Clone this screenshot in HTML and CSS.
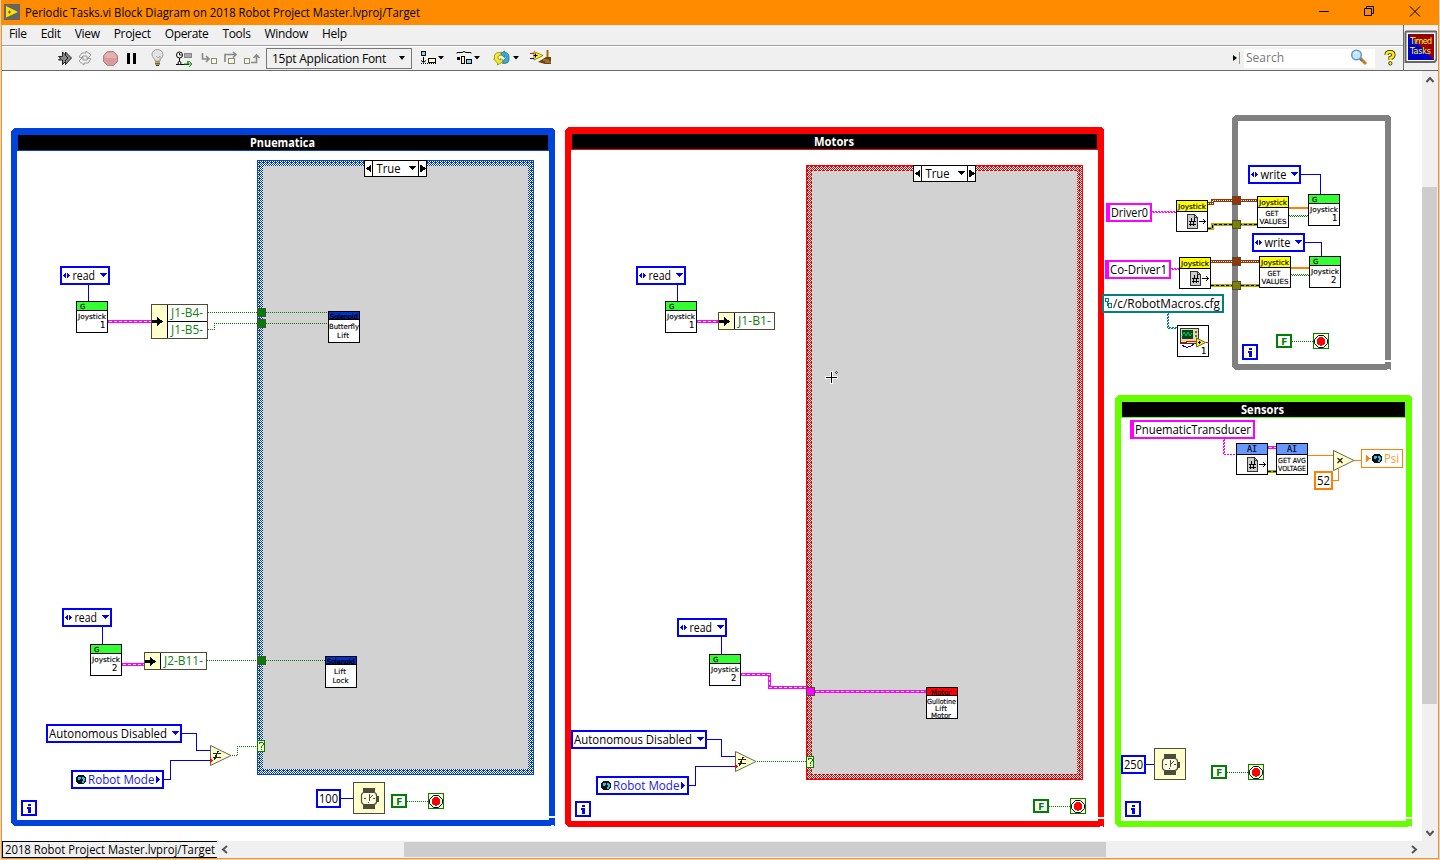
FILE: index.html
```html
<!DOCTYPE html>
<html lang="en">
<head>
<meta charset="utf-8">
<title>Periodic Tasks.vi Block Diagram</title>
<link rel="stylesheet" href="styles.css">
</head>
<body>
<div class="window">
  <header class="titlebar">
    <svg class="app-icon" width="16" height="16" viewBox="0 0 16 16"><rect width="16" height="16" fill="#666"/><path d="M2 2L14 8L2 13.500Z" fill="#ffe000"/><path d="M4 8h3M5.500 6.500v3" stroke="#665500"/></svg>
    <svg class="fit" width="420" height="25"><text x="0" y="17" class="ui title" textLength="395" lengthAdjust="spacingAndGlyphs">Periodic Tasks.vi Block Diagram on 2018 Robot Project Master.lvproj/Target</text></svg>
    <svg class="win-buttons" width="104" height="24" viewBox="1318 0 104 24" fill="none" stroke="#000"><path d="M1319 11.500h10"/><path d="M1364.500 8.500h7v7h-7zM1366.500 8v-1.500h7v7h-2" /><path d="M1410 6.500l10 10M1420 6.500l-10 10"/></svg>
  </header>

  <div class="bars">
    <div class="bars-left">
      <nav class="menubar"><span>File</span><span>Edit</span><span>View</span><span>Project</span><span>Operate</span><span>Tools</span><span>Window</span><span>Help</span></nav>
      <div class="toolbar">
        <svg class="tools" width="210" height="23" viewBox="56 47 210 23">
          <path d="M58.500 56.500h4v-4.500l3 3v-3l6 6-6 6.500v-3l-3 3v-4.500h-4l2-2z" fill="#888" stroke="#222"/><path d="M65 55l3 3-3 3" fill="none" stroke="#222"/>
          <g fill="none" stroke="#999"><path d="M79 57l3-4h4v-2l5 4-4 4v-3h-4l-2 2z"/><path d="M91 59l-3 4h-4v2l-5-4 4-4v3h4l2-2z"/></g>
          <path d="M107.500 51.500h6l4 4v6l-4 4h-6l-4-4v-6z" fill="#d99" stroke="#a88"/><path d="M107 53h7l2 3v2h-11v-3z" fill="#e5b2b2"/>
          <path d="M127 53h3v11h-3zM133 53h3v11h-3z" fill="#000"/>
          <path d="M155 61c0-3-3-3-3-6.500a5.500 5 0 0 1 11 0c0 3.500-3 3.500-3 6.500z" fill="#e3e3e3" stroke="#999"/><path d="M156 56l2 2 2-2v4" fill="none" stroke="#aaa"/><path d="M155 61h5v4h-5z" fill="#a9a24b"/><path d="M155 63.500h5" stroke="#666"/><path d="M156 65.500h3" stroke="#333"/>
          <circle cx="179.500" cy="55" r="3" fill="#fff" stroke="#000"/><path d="M179.500 53v2h2M179.500 58v4M176 64.500h8M188 64v-3M184 64.500h5" stroke="#000" fill="none"/><rect x="184.500" y="53.500" width="7" height="4" fill="#aaa" stroke="#888"/><circle cx="179.500" cy="63" r="1.500" fill="#fff" stroke="#000"/><path d="M184 64h7M189 61l3 3-3 3" fill="none" stroke="#00a800"/>
          <g fill="none" stroke="#888"><path d="M202.500 53v6h6M206 56l3 3-3 3" stroke-width="1.600"/><rect x="211.500" y="58.500" width="5" height="5" fill="#fdfdd2"/><path d="M225 62v-7.500h11M233 52l3 2.500-3 3" stroke-width="1.600"/><rect x="228.500" y="58.500" width="6" height="5" fill="#fdfdd2"/><rect x="244.500" y="58.500" width="5" height="5" fill="#fdfdd2"/><path d="M251 62.500h5.500v-7M253.500 58l3-3 3 3" stroke-width="1.600"/></g>
        </svg>
        <div class="font-select"><span>15pt Application Font</span><i class="caret"></i></div>
        <svg width="146" height="23" viewBox="412 47 146 23">
          <g stroke="#000"><rect x="421.500" y="51.500" width="4" height="4" fill="#6cdfff"/><path d="M423.500 57v5M421 60.500l2.500 2 2.500-2" fill="none"/><path d="M421 63.500h15" stroke-dasharray="1 1"/><rect x="428.500" y="58.500" width="7" height="4" fill="#ffffa8"/><path d="M457 53.500v-1h5l2-1 2 1h5v1" fill="none"/><path d="M457 57h3v3h-3z" stroke="none"/><rect x="461.500" y="56.500" width="3" height="7" fill="#ffffa8"/><rect x="466.500" y="59.500" width="5" height="4" fill="#6cdfff"/></g>
          <path d="M438 56h6l-3 3.500zM474 56h6l-3 3.500zM513 56h6l-3 3.500z"/>
          <path d="M502 52.500q-7-1-7.500 3.500v3h-1l4 4v2l5-3v-2.500l-2-1v1.500q-2.500 0-2.500-3 0-2 4-2z" fill="#f2e72e" stroke="#988e00" stroke-width=".8"/>
          <path d="M500.500 54l4-3v1.500q4.500 0 4.500 4.500v3q0 3-4 3.500h-2.500l1.500-4q2-.5 2-2 0-1.500-1.500-2v2z" fill="#3fa9cd" stroke="#227793" stroke-width=".8"/>
          <path d="M534 51.500l9 4-9 4.500z" fill="#ffef36" stroke="#9a8a00"/><path d="M530 53.500h4" stroke="red"/><path d="M530 58.500h4" stroke="blue"/><path d="M533.500 55.500h4M535.500 53.500v4" stroke="#000"/><path d="M546.500 50h2v8h-2z" fill="#a56d00"/><path d="M538 62l8-5h5v7l-6 0z" fill="#704000"/><path d="M543 60h6M545 62h6" stroke="#bb9b70"/>
        </svg>
        <div class="spacer"></div>
        <i class="play"></i><i class="sep"></i>
        <div class="search"><span>Search</span>
          <svg width="18" height="18" viewBox="0 0 18 18"><path d="M10 9l6 6" stroke="#d07820" stroke-width="3"/><path d="M9 9l3 3" stroke="#777" stroke-width="2"/><circle cx="6.500" cy="6" r="4.800" fill="#bfe8ff" stroke="#6998c2" stroke-width="1.500"/><path d="M4 5q1-2 3-2" stroke="#fff" fill="none"/></svg>
        </div>
        <svg class="help" width="12" height="16" viewBox="0 0 12 16" fill="none"><path d="M2.500 5Q2.500 2 6 2t3.500 3Q9.500 7 6.500 8v2" stroke="#222" stroke-width="4"/><path d="M2.500 5Q2.500 2 6 2t3.500 3Q9.500 7 6.500 8v2" stroke="#ffed00" stroke-width="2.600"/><circle cx="6.300" cy="13.300" r="1.700" fill="#ffed00" stroke="#222" stroke-width=".8"/></svg>
      </div>
    </div>
    <svg class="vi-icon" width="33" height="44" viewBox="1404 25 33 44"><path d="M1405.500 32.500q0-1 1-1h29q1 0 1 1v27l-2 2.500h-29z" fill="#fff" stroke="#666" stroke-width="2"/><path d="M1408 34h26v26h-26z" fill="#900"/><path d="M1408 34l26 26h-26z" fill="#00c"/><g fill="#ff3"><text x="1410" y="44" class="p8" textLength="22">Timed</text><text x="1410" y="54" class="p8" textLength="21">Tasks</text></g></svg>
  </div>

  <main class="work">
    <svg class="canvas" width="1420" height="770" viewBox="2 71 1420 770">
      <defs>
        <pattern id="ckB" width="4" height="4" patternUnits="userSpaceOnUse"><rect width="4" height="4" fill="#fff"/><path d="M0 0h1v1h-1zM2 0h1v1h-1zM1 1h1v1h-1zM3 1h1v1h-1zM0 2h1v1h-1zM2 2h2v1h-2zM1 3h1v1h-1zM3 3h1v1h-1z" fill="#0038c4"/></pattern>
        <pattern id="ckR" width="4" height="4" patternUnits="userSpaceOnUse"><rect width="4" height="4" fill="#fff"/><path d="M0 0h1v1h-1zM2 0h1v1h-1zM1 1h1v1h-1zM3 1h1v1h-1zM0 2h1v1h-1zM2 2h2v1h-2zM1 3h1v1h-1zM3 3h1v1h-1z" fill="#e80000"/></pattern>
        <g id="box"><rect x=".5" y=".5" width="31" height="31" fill="#fff" stroke="#000"/></g>
        <g id="joy"><use href="#box"/><path d="M1 1h30v8h-30z" fill="#3f3"/><path d="M1 9.500h30" stroke="#000"/><text x="4" y="8" class="p7" textLength="5">G</text><text x="2" y="18" class="p7" textLength="28" lengthAdjust="spacingAndGlyphs">Joystick</text></g>
        <g id="doc"><path d="M11.500 14.500h7l3 3v11h-10z" fill="#ccc" stroke="#333"/><path d="M18.500 14.500v3h3" fill="none" stroke="#333"/><path d="M15.500 18.500l-1 8M18.500 18.500l-1 8M13 21h6.500M13 24h6.500" stroke="#000" fill="none"/><path d="M23 21.500h7M27 19l2.500 2.500-2.500 2.500" stroke="#000" fill="none"/></g>
        <g id="jopen"><use href="#box"/><path d="M1 1h30v10h-30z" fill="#ff0"/><path d="M1 11.500h30" stroke="#000"/><text x="2" y="9" class="p7" textLength="28" lengthAdjust="spacingAndGlyphs">Joystick</text><use href="#doc"/></g>
        <g id="jget"><use href="#box"/><path d="M1 1h30v10h-30z" fill="#ff0"/><path d="M1 11.500h30" stroke="#000"/><text x="2" y="9" class="p7" textLength="28" lengthAdjust="spacingAndGlyphs">Joystick</text><text x="8.500" y="20" class="p7" textLength="13" lengthAdjust="spacingAndGlyphs">GET</text><text x="2.500" y="28" class="p7" textLength="27" lengthAdjust="spacingAndGlyphs">VALUES</text></g>
        <g id="ring"><rect x="1" y="1" width="48" height="17" class="bb"/><path d="M2.500 9.500l3-3v6zM9.500 9.500l-3-3v6zM40 7h7l-3.500 4z" fill="#00f"/><text x="12.500" y="14" class="ui" textLength="22.500" lengthAdjust="spacingAndGlyphs">read</text></g>
        <g id="wring"><rect x="1" y="1" width="51" height="17" class="bb"/><path d="M2.500 9.500l3-3v6zM9.500 9.500l-3-3v6zM43 7h7l-3.500 4z" fill="#00f"/><text x="12.500" y="14" class="ui" textLength="26" lengthAdjust="spacingAndGlyphs">write</text></g>
        <g id="globe"><circle r="5" fill="#111"/><path d="M-3-2l2-1 1 1-1 2-2 0zM1-3l2 1 1 2-1 3-2 1v-2l1-1-1-2z" fill="#25c3ef"/></g>
        <g id="arrow"><path d="M0 0h5v-3l6 4.500-6 4.500v-3h-5z" fill="#000"/></g>
        <g id="i"><rect x="1" y="1" width="14" height="14" fill="#ffc" stroke="#00f" stroke-width="2"/><path d="M7 4h2.500v2h-2.500z" fill="#00f"/><path d="M6 7h3.500v5.500h-2.500v-4h-1z" fill="#00f"/></g>
        <g id="f"><rect x="1" y="1" width="14" height="12" fill="#fff" stroke="#008000" stroke-width="2"/><text x="5.300" y="11" class="fb">F</text><path d="M16 7.500h21" class="bool"/><rect x="37.500" y="-.5" width="15" height="15" fill="#ffc" stroke="#008000"/><path d="M42.500 1.500h5l4 4v4l-4 4h-5l-4-4v-4z" fill="#fff" stroke="#000" shape-rendering="auto"/><circle cx="45" cy="7.500" r="4.300" fill="red"/></g>
        <g id="watch"><rect x=".5" y=".5" width="31" height="31" fill="#ffc" stroke="#4c4c3c"/><path d="M10 6h12v5h-12zM10 22h12v5h-12z" fill="#4c4c3c"/><rect x="8.500" y="10.500" width="15" height="12" rx="3" fill="#ffffe0" stroke="#4c4c3c" stroke-width="1.200" shape-rendering="auto"/><path d="M24 14h1v5h-1zM16 12v7M16 17l4-4M11 16.500h2M20 16.500h2M15.500 20v1" stroke="#4c4c3c" fill="none"/></g>
        <g id="q"><rect x=".5" y=".5" width="7" height="11" fill="#ffc" stroke="#008000"/><path d="M2 4v-1l1-1h2l1 1v2l-2 2v1M4 9v1" fill="none" stroke="#008000"/></g>
        <g id="mode">
          <rect x="47" y="725" width="134" height="17" class="bb"/><text x="49" y="738" class="ui" textLength="118" lengthAdjust="spacingAndGlyphs">Autonomous Disabled</text><path d="M171.500 731h8l-4 4z" fill="#00f"/>
          <rect x="72" y="771" width="91" height="17" class="bb"/><use href="#globe" x="81" y="779.500"/><text x="88" y="784" class="ui blue" textLength="66.500" lengthAdjust="spacingAndGlyphs">Robot Mode</text><path d="M156 775.500l4 4-4 4z" fill="#00f"/>
          <path d="M182 733.500h14.500v17h14M164 779.500h6.500v-19h40" class="bw"/>
          <path d="M210.500 745.500l20.500 10-20.500 10z" fill="#ffc" stroke="#665" shape-rendering="auto"/><path d="M212.500 753.500h8M212.500 757.500h8M218 751l-3.500 9" stroke="#222" stroke-width="1.500" fill="none"/><path d="M210 757.500l3 3-3 3z" fill="red"/>
        </g>
        <g id="case"><rect x=".5" y=".5" width="62" height="16" fill="#fff" stroke="#000"/><path d="M8.500 0v17M54.500 0v17" stroke="#000"/><path d="M7 4.500v8l-5-4zM56 4.500v8l6-4zM44.500 6h8l-4 4.500z" fill="#000"/><text x="12.500" y="13" class="ui" textLength="24" lengthAdjust="spacingAndGlyphs">True</text></g>
        <g id="sol"><use href="#box"/><path d="M1 1h30v7h-30z" fill="#03c"/><path d="M1 8.500h30" stroke="#000"/><text x="2" y="7.500" class="p7 heavy" textLength="28" lengthAdjust="spacingAndGlyphs">Solenoid</text></g>
      </defs>
      <rect x="2" y="71" width="1420" height="770" fill="#fff"/>

      <g shape-rendering="crispEdges">
        <!-- loops -->
        <g fill="#0042dc"><path fill-rule="evenodd" d="M14 128h538l3 3v695h-541l-3-3v-692zM17 134v686h532v-686z"/><path d="M17 134h532v17h-532z"/><path d="M18 135h530v15h-530z" fill="#000"/><path d="M549 816h7v2h-7zM547 818h1v2h-1zM551 825h3v1h-3z" fill="#fff"/></g>
        <g fill="#f00"><path fill-rule="evenodd" d="M568 127h533l3 3v697h-536l-3-3v-694zM571 133v688h527v-688z"/><path d="M571 133h527v17h-527z"/><path d="M572 134h525v15h-525z" fill="#000"/><path d="M1098 817h7v2h-7zM1100 826h3v1h-3z" fill="#fff"/></g>
        <g fill="#808080"><path fill-rule="evenodd" d="M1235 115h153l3 3v252h-156l-3-3v-249zM1238 121v243h147v-243z"/><path d="M1385 360h7v2h-7zM1387 369h3v1h-3z" fill="#fff"/></g>
        <g fill="#6f0"><path fill-rule="evenodd" d="M1118 395h291l3 3v429h-294l-3-3v-426zM1121 401v420h285v-420z"/><path d="M1121 401h285v17h-285z"/><path d="M1122 402h283v15h-283z" fill="#000"/><path d="M1406 817h7v2h-7zM1408 826h3v1h-3z" fill="#fff"/></g>
        <!-- case structures -->
        <rect x="257" y="160" width="277" height="615" fill="#0042dc"/><rect x="258" y="161" width="275" height="613" fill="url(#ckB)"/><rect x="263" y="166" width="265" height="603" fill="#d2d2d2"/>
        <rect x="806" y="165" width="277" height="615" fill="#f00"/><rect x="807" y="166" width="275" height="613" fill="url(#ckR)"/><rect x="812" y="171" width="265" height="603" fill="#d2d2d2"/>
        <use href="#case" x="364" y="160"/><use href="#case" x="913" y="165"/>

        <!-- wires -->
        <path class="bw" d="M88.500 285v16M102.500 627v17M677.500 285v16M721.500 637v17M1301 174.500h19.500v20M1305 242.500h16.500v14M341 798.500h12M1146 764.500h8"/>
        <path class="cl" d="M108 321.500h43M122 664.500h22M697 321.500h21M741 674.500h28.500v13h37M815 691.500h111M1268 447.500h8"/>
        <path class="cl-in" d="M109 321.500h42M123 664.500h21M698 321.500h20M742 674.500h27.500v13h37M816 691.500h110M1269 447.500h7"/>
        <path class="bool" d="M208 312.500h50M208 329.500h6.500v-6h43M266 312.500h62M266 323.500h62M207 660.500h50M266 660.500h59M232 755.500h5.500v-9h20M757 761.500h49M1289 215.500h19M1290 216.500h18M1291 274.500h18M1292 275.500h17"/>
        <g fill="none" stroke-width="3"><path d="M1208 203.500h4.500v-3h45M1211 261.500h48" stroke="#930"/><path d="M1208 228.500h4.500v-4h45M1211 285.500h48M1268 471.500h8" stroke="#b0a800"/></g>
        <g fill="none"><path d="M1208 203.500h4.500v-3h45M1211 261.500h48" stroke="#fff" stroke-dasharray="1 1"/><path d="M1208 228.500h4.500v-4h45M1211 285.500h48M1268 471.500h8" stroke="#000" stroke-dasharray="3 2"/></g>
        <path d="M1289 208h19M1291 268h18" stroke="#ff8000" stroke-width="2"/>
        <path d="M1308 455.500h26M1354 460.500h7M1333 480.500h5.500v-12" stroke="#ff8000" fill="none"/>
        <path d="M1152 211.500h24M1171 268.500h8M1224.500 439v15.500h12" class="str"/><path d="M1153 212.500h23M1172 269.500h7M1223.500 440v14.500h12" class="str"/>
        <path d="M1168.500 313v14.500h9M1167.500 314v14.500h10" fill="none" stroke="#008080" stroke-dasharray="2 1"/>

        <!-- tunnels -->
        <g stroke="#4c4c3c"><path d="M257.500 308.500h8v8h-8zM257.500 319.500h8v8h-8zM257.500 656.500h8v8h-8z" fill="#008000"/><path d="M806.500 687.500h8v8h-8z" fill="#f0f"/><path d="M1232.500 196.500h8v8h-8zM1232.500 257.500h8v8h-8z" fill="#930"/><path d="M1232.500 220.500h8v8h-8zM1232.500 281.500h8v8h-8z" fill="#808000"/></g>
        <use href="#q" x="257" y="740"/><use href="#q" x="806" y="756"/>

        <!-- pneumatics -->
        <use href="#ring" x="60" y="266"/><use href="#joy" x="76" y="301"/><text x="100" y="328" class="p9">1</text>
        <rect x="151.500" y="304.500" width="56" height="34" fill="#fff" stroke="#4c4c33"/><path d="M152 305h15v33h-15z" fill="#ffc"/><path d="M167.500 305v33M167 321.500h40" stroke="#000"/><use href="#arrow" x="152" y="320"/>
        <use href="#ring" x="62" y="608"/><use href="#joy" x="90" y="644"/><text x="112" y="671" class="p9">2</text>
        <rect x="144.500" y="652.500" width="62" height="17" fill="#fff" stroke="#4c4c33"/><path d="M145 653h15v16h-15z" fill="#ffc"/><path d="M160.500 653v16" stroke="#000"/><use href="#arrow" x="145" y="660"/>
        <use href="#sol" x="328" y="311"/><use href="#sol" x="325" y="656"/>
        <use href="#mode"/><use href="#i" x="21" y="800"/>
        <rect x="317" y="790" width="23" height="17" class="bb"/><use href="#watch" x="353" y="782"/><use href="#f" x="391" y="794"/>

        <!-- motors -->
        <use href="#ring" x="636" y="266"/><use href="#joy" x="665" y="301"/><text x="689" y="328" class="p9">1</text>
        <rect x="718.500" y="312.500" width="56" height="17" fill="#fff" stroke="#4c4c33"/><path d="M719 313h15v16h-15z" fill="#ffc"/><path d="M734.500 313v16" stroke="#000"/><use href="#arrow" x="719" y="320"/>
        <use href="#ring" x="677" y="618"/><use href="#joy" x="709" y="654"/><text x="731" y="681" class="p9">2</text>
        <use href="#box" x="926" y="687"/><path d="M927 688h30v7h-30z" fill="red"/><path d="M927 695.500h30" stroke="#000"/>
        <use href="#mode" x="525" y="6"/><use href="#i" x="575" y="801"/><use href="#f" x="1033" y="799"/>
        <path d="M831.500 371v13M825 377.500h13" stroke="#fff" stroke-width="3"/><path d="M831.500 372v11M826 377.500h11" stroke="#000"/><path d="M835 372h1v1h-1zM836 371h1v1h-1zM837 372h1v1h-1zM836 373h1v1h-1z" fill="#444"/>

        <!-- joystick acquisition -->
        <path d="M1106 203h46v19h-46zM1105 260h66v19h-66zM1130 420h125v19h-125z" fill="#f0f"/><path d="M1110 205h40v15h-40zM1109 262h60v15h-60zM1134 422h119v15h-119z" fill="#fff"/>
        <use href="#jopen" x="1176" y="200"/><use href="#jopen" x="1179" y="257"/><use href="#jget" x="1257" y="196"/><use href="#jget" x="1259" y="256"/>
        <use href="#wring" x="1248" y="165"/><use href="#wring" x="1252" y="233"/>
        <use href="#joy" x="1308" y="194"/><text x="1332" y="221" class="p9">1</text><use href="#joy" x="1309" y="256"/><text x="1331" y="283" class="p9">2</text>
        <rect x="1103" y="295" width="120" height="17" fill="#fff" stroke="#008080" stroke-width="2"/><path d="M1105.500 298.500h3v3h-3zM1107.500 301.500v4h1M1108.500 303.500h3v4h-3z" fill="none" stroke="#008080"/>
        <use href="#box" x="1177" y="325"/><rect x="1180.500" y="328.500" width="18" height="15" fill="#e3dba0" stroke="#333"/><path d="M1182 330h11v9h-11z" fill="#042"/><path d="M1182 336l2-4 2 4 2-4 2 4 2-3" fill="none" stroke="#0c4" shape-rendering="auto"/><path d="M1195 331h2v2h-2zM1195 335h2v2h-2z" fill="#665"/><path d="M1181 342l4 1 3-2h8M1206 342.500h3" stroke="red" fill="none"/><path d="M1182 345q5 5 12-1" stroke="#00b" fill="none"/><path d="M1196.500 338l9 4.500-9 4.500z" fill="#fe0" stroke="#665" shape-rendering="auto"/><path d="M1198 342.500h3M1199.500 341v3" stroke="#000"/><text x="1201" y="354" class="p9">1</text>
        <use href="#i" x="1242" y="344"/><use href="#f" x="1276" y="334"/>

        <!-- sensors -->
        <use href="#box" x="1236" y="443"/><use href="#box" x="1276" y="443"/><path d="M1237 444h30v10h-30zM1277 444h30v10h-30z" fill="#69f"/><path d="M1237 454.500h30M1277 454.500h30" stroke="#000"/><use href="#doc" x="1236" y="443"/>
        <path d="M1333.500 450.500l20.500 10-20.500 10z" fill="#ffc" stroke="#665" shape-rendering="auto"/><path d="M1337.500 458l5 5M1342.500 458l-5 5" stroke="#222" stroke-width="1.300" shape-rendering="auto"/>
        <rect x="1315" y="472" width="17" height="17" fill="#fff" stroke="#ff8000" stroke-width="2"/><rect x="1361.500" y="449.500" width="41" height="18" fill="#fff" stroke="#ff8000"/><path d="M1366 454.500l4.500 4-4.500 4z" fill="#ff8000"/><use href="#globe" x="1377" y="458.500"/>
        <rect x="1122" y="756" width="23" height="17" class="bb"/><use href="#watch" x="1154" y="748"/><use href="#f" x="1211" y="765"/><use href="#i" x="1125" y="801"/>
      </g>

      <g class="ui">
        <g class="cap"><text x="250" y="147" textLength="65" lengthAdjust="spacingAndGlyphs">Pnuematica</text><text x="814" y="146" textLength="40" lengthAdjust="spacingAndGlyphs">Motors</text><text x="1241" y="414" textLength="43" lengthAdjust="spacingAndGlyphs">Sensors</text></g>
        <g fill="#108010"><text x="171" y="317" textLength="32" lengthAdjust="spacingAndGlyphs">J1-B4-</text><text x="171" y="334" textLength="32" lengthAdjust="spacingAndGlyphs">J1-B5-</text><text x="164" y="665" textLength="39" lengthAdjust="spacingAndGlyphs">J2-B11-</text><text x="738" y="325" textLength="33" lengthAdjust="spacingAndGlyphs">J1-B1-</text></g>
        <text x="319" y="803" textLength="19" lengthAdjust="spacingAndGlyphs">100</text><text x="1124" y="769" textLength="19" lengthAdjust="spacingAndGlyphs">250</text><text x="1317" y="485" textLength="13" lengthAdjust="spacingAndGlyphs">52</text>
        <text x="1384" y="463" fill="#ff9a33" textLength="15" lengthAdjust="spacingAndGlyphs">Psi</text>
        <text x="1111" y="217" textLength="37" lengthAdjust="spacingAndGlyphs">Driver0</text><text x="1110" y="274" textLength="57" lengthAdjust="spacingAndGlyphs">Co-Driver1</text><text x="1113" y="308" textLength="107" lengthAdjust="spacingAndGlyphs">/c/RobotMacros.cfg</text><text x="1135" y="434" textLength="116" lengthAdjust="spacingAndGlyphs">PnuematicTransducer</text>
      </g>
      <g class="p7"><text x="329" y="329" textLength="30" lengthAdjust="spacingAndGlyphs">Butterfly</text><text x="337" y="338" textLength="12">Lift</text><text x="334" y="674" textLength="12">Lift</text><text x="332.500" y="683" textLength="16">Lock</text><text x="931" y="694.500" textLength="20">Motor</text><text x="927" y="703.500" textLength="29" lengthAdjust="spacingAndGlyphs">Gullotine</text><text x="935" y="710.500" textLength="12">Lift</text><text x="931" y="717.500" textLength="20">Motor</text><text x="1278" y="463" textLength="28" lengthAdjust="spacingAndGlyphs">GET AVG</text><text x="1278" y="471" textLength="28" lengthAdjust="spacingAndGlyphs">VOLTAGE</text><text x="1247" y="452" class="mono">AI</text><text x="1287" y="452" class="mono">AI</text></g>
    </svg>
    <div class="vscroll"><svg width="16" height="16"><path d="M4.500 11l3.500-4 3.500 4" class="chev"/></svg><div class="vthumb"></div><svg width="16" height="16"><path d="M4.500 5l3.500 4 3.500-4" class="chev"/></svg></div>
  </main>

  <footer class="bottom">
    <div class="project"><svg width="212" height="15"><text x="0" y="11.500" class="ui" textLength="210" lengthAdjust="spacingAndGlyphs">2018 Robot Project Master.lvproj/Target</text></svg></div>
    <div class="hscroll"><svg width="16" height="16"><path d="M10 4l-4 3.500 4 3.500" class="chev"/></svg><div class="hthumb"></div><svg class="hright" width="16" height="16"><path d="M5 4l4 3.500-4 3.500" class="chev"/></svg></div>
  </footer>
</div>
</body>
</html>
```
FILE: styles.css
```css
* { box-sizing: border-box; }
body { margin: 0; width: 1440px; height: 860px; overflow: hidden; background: #d8d4cf; font: 12px "Open Sans", "Noto Sans", sans-serif; color: #000; }
svg { display: block; flex: none; }
.window { width: 1438px; height: 859px; margin-left: 1px; border: 1px solid #f7941d; border-top: 0; background: #f0f0f0; display: flex; flex-direction: column; }
.titlebar { height: 25px; flex: none; background: #ff8c00; display: flex; margin: 0 -1px; padding-left: 3px; }
.app-icon { margin: 4px 5px 0 0; }
.win-buttons { margin-left: auto; margin-right: 17px; }
.bars { height: 46px; flex: none; display: flex; border-bottom: 1px solid #696969; }
.bars-left { width: 1402px; flex: none; border-right: 1px solid #696969; }
.menubar { height: 21px; border-bottom: 1px solid #a0a0a0; display: flex; gap: 14px; padding-left: 7px; line-height: 18px; letter-spacing: -0.32px; }
.toolbar { height: 24px; border-top: 1px solid #fff; display: flex; padding-left: 54px; }
.font-select { width: 146px; height: 21px; margin-top: 1px; border: 1px solid #777; display: flex; align-items: center; justify-content: space-between; padding: 0 6px 1px 5px; letter-spacing: -0.25px; white-space: nowrap; }
.caret { border: 3px solid transparent; border-top: 4px solid #000; border-bottom: 0; }
.spacer { flex: 1; }
.play { border: 3px solid transparent; border-left: 4px solid #000; border-right: 0; margin: 8px 2px 0 0; height: 6px; }
.sep { width: 1px; height: 12px; margin-top: 5px; background: #999; margin-right: 4px; }
.search { width: 131px; height: 19px; margin-top: 2px; background: #fff; color: #777; display: flex; justify-content: space-between; line-height: 18px; padding: 0 7px 0 2px; }
.help { margin: 3px 7px 0 9px; }
.work { height: 770px; flex: none; display: flex; }
.vscroll { width: 15px; height: 770px; background: #f0f0f0; display: flex; flex-direction: column; }
.vthumb { height: 517px; margin-top: 100px; margin-bottom: 122px; background: #cdcdcd; flex: none; }
.bottom { flex: 1; display: flex; }
.project { width: 215px; border: 1px solid #000; border-right: 0; padding-left: 2px; }
.hscroll { flex: 1; display: flex; margin-top: 1px; }
.hthumb { width: 702px; height: 15px; margin-left: 171px; background: #cdcdcd; }
.hright { margin-left: auto; margin-right: 15px; }
.chev { fill: none; stroke: #555; stroke-width: 2; }
.ui { font: 12px "Open Sans", "Noto Sans", sans-serif; }
.blue { fill: #2020dd; }
.cap { font-weight: 700; fill: #fff; }
.p7, .p8, .p9 { font-family: "DejaVu Sans", sans-serif; font-size: 7px; stroke: currentColor; stroke-width: 0.15px; }
.p8 { font-size: 8px; stroke: none; }
.p9 { font-size: 8.5px; }
.heavy { stroke-width: 0.4px; }
.mono { font: 8.5px "DejaVu Sans Mono", monospace; }
.fb { font: bold 9px "DejaVu Sans", sans-serif; fill: #008000; }
.bb { fill: #fff; stroke: #00f; stroke-width: 2; }
.bw { fill: none; stroke: #0000e8; }
.bool { fill: none; stroke: #008000; stroke-dasharray: 1 1; }
.cl { fill: none; stroke: #f0f; stroke-width: 3; }
.cl-in { fill: none; stroke: #fff; stroke-dasharray: 3 2; }
.str { fill: none; stroke: #f0f; stroke-dasharray: 2 1; }
```
